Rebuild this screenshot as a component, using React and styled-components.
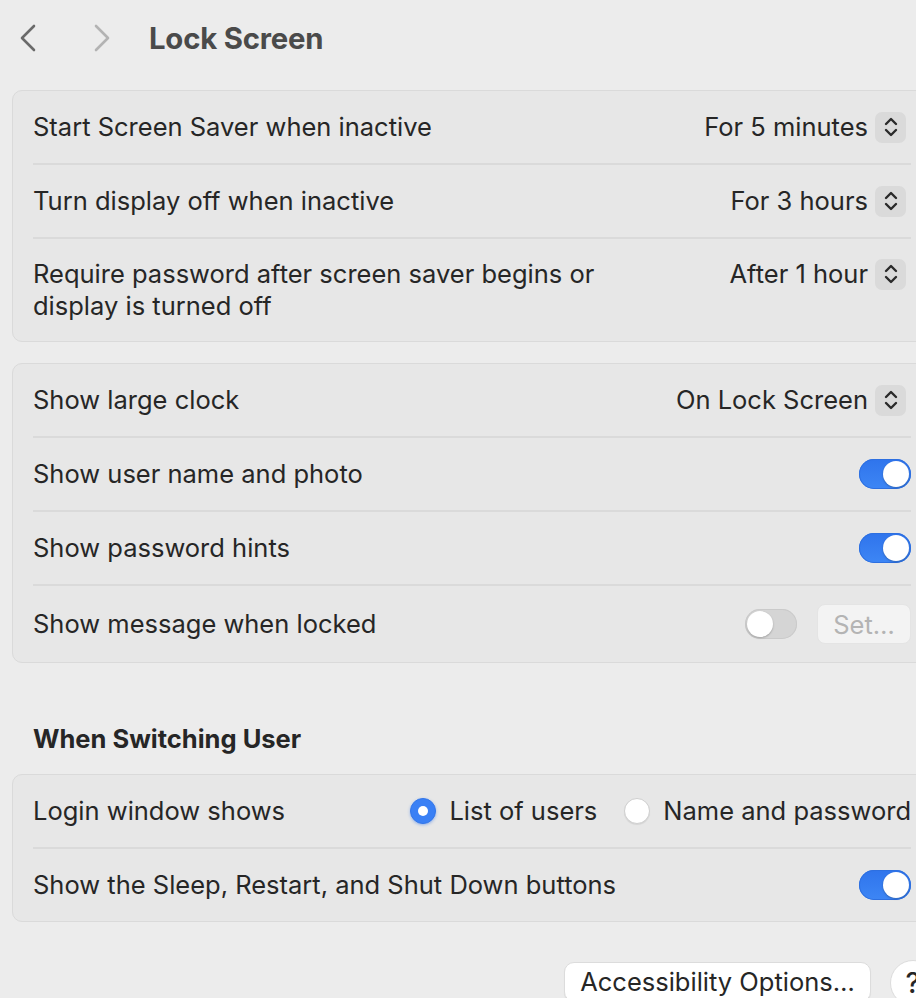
import React from 'react';
import styled, { createGlobalStyle } from 'styled-components';

const GlobalStyle = createGlobalStyle`
  html, body {
    margin: 0;
    padding: 0;
    background: #ececec;
    overflow: hidden;
  }
  body {
    font-family: Inter, "Liberation Sans", sans-serif;
    color: #262626;
    -webkit-font-smoothing: antialiased;
  }
`;

const Page = styled.div`
  width: 920px;
  margin-left: 12px;
  display: flex;
  flex-direction: column;
`;

const Header = styled.div`
  height: 76px;
  display: flex;
  align-items: center;
  margin-left: -12px;
  padding-left: 17px;
  margin-bottom: 14px;
`;

const NavButton = styled.button`
  background: none;
  border: none;
  padding: 0;
  width: 22px;
  height: 28px;
  margin-right: ${({ gap }) => gap}px;
  color: ${({ dim }) => (dim ? '#b3b3b3' : '#6a6a6a')};
  display: flex;
  align-items: center;
  justify-content: center;
`;

const Title = styled.h1`
  margin: 0;
  font-size: 29.3px;
  font-weight: 700;
  color: #4a4a4a;
  letter-spacing: -0.2px;
`;

const Panel = styled.div`
  background: #e7e7e7;
  border: 1px solid #dadada;
  border-radius: 10px;
  padding: 0 20px;
  margin-bottom: ${({ mb }) => mb || 0}px;
`;

const Row = styled.div`
  min-height: 40px;
  padding: ${({ pad }) => pad || 16}px 0;
  display: flex;
  align-items: ${({ top }) => (top ? 'flex-start' : 'center')};
  justify-content: space-between;
  gap: 20px;
  & + & {
    border-top: 2px solid #dadada;
  }
`;

const Label = styled.div`
  font-size: 25.5px;
  line-height: 32px;
  max-width: ${({ narrow }) => (narrow ? '600px' : 'none')};
`;

const Controls = styled.div`
  display: flex;
  align-items: center;
  gap: ${({ gap }) => gap || 7}px;
  flex-shrink: 0;
  margin-right: ${({ mr }) => mr || 0}px;
`;

const Value = styled.span`
  font-size: 25.5px;
  line-height: 32px;
`;

const Stepper = styled.div`
  width: 31px;
  height: 31px;
  flex-shrink: 0;
  border-radius: 7px;
  background: #dadada;
  display: flex;
  align-items: center;
  justify-content: center;
  color: #2a2a2a;
`;

const Track = styled.div`
  width: 52px;
  height: 30px;
  flex-shrink: 0;
  border-radius: 15px;
  box-sizing: border-box;
  padding: 2px;
  display: flex;
  justify-content: ${({ on }) => (on ? 'flex-end' : 'flex-start')};
  background: ${({ on }) => (on ? 'linear-gradient(#2f74ec, #3d86f5)' : '#d5d5d5')};
  box-shadow: inset 0 0 0 1px ${({ on }) => (on ? '#2d6fe0' : '#cacaca')};
`;

const Knob = styled.div`
  width: 26px;
  height: 26px;
  border-radius: 50%;
  background: #ffffff;
  box-shadow: 0 1px 2px rgba(0, 0, 0, 0.25);
`;

const SetButton = styled.button`
  width: 94px;
  height: 40px;
  border-radius: 8px;
  border: 1px solid #e4e4e4;
  background: #f3f3f3;
  color: #b4b4b4;
  font-family: inherit;
  font-size: 25.5px;
  padding: 0;
`;

const SectionTitle = styled.h2`
  margin: 0 0 19px 21px;
  font-size: 25.5px;
  line-height: 32px;
  font-weight: 700;
  color: #262626;
`;

const RadioOption = styled.label`
  display: flex;
  align-items: center;
  gap: 13px;
  font-size: 25.5px;
  line-height: 32px;
`;

const RadioDot = styled.span`
  width: 26px;
  height: 26px;
  border-radius: 50%;
  box-sizing: border-box;
  display: flex;
  align-items: center;
  justify-content: center;
  background: ${({ checked }) => (checked ? '#3a80f5' : '#ffffff')};
  border: 1px solid ${({ checked }) => (checked ? '#3276ea' : '#cfcfcf')};
  box-shadow: ${({ checked }) => (checked ? '0 1px 3px rgba(50,118,234,0.45)' : '0 1px 1px rgba(0,0,0,0.08)')};
  &::after {
    content: '';
    width: 10px;
    height: 10px;
    border-radius: 50%;
    background: #ffffff;
    display: ${({ checked }) => (checked ? 'block' : 'none')};
  }
`;

const Footer = styled.div`
  display: flex;
  justify-content: flex-end;
  align-items: flex-start;
  gap: 19px;
  padding-top: 40px;
  margin-right: -4px;
`;

const PlainButton = styled.button`
  height: 40px;
  width: 307px;
  padding: 0;
  border-radius: 10px;
  border: 1px solid #dcdcdc;
  background: #ffffff;
  font-family: inherit;
  font-size: 25.5px;
  line-height: 32px;
  color: #262626;
  box-shadow: 0 1px 1px rgba(0, 0, 0, 0.06);
`;

const HelpButton = styled.button`
  width: 46px;
  height: 46px;
  margin-top: -2px;
  border-radius: 50%;
  border: 1px solid #dcdcdc;
  background: #ffffff;
  font-family: inherit;
  font-size: 28px;
  font-weight: 500;
  padding: 0;
  color: #262626;
`;

const Chevron = ({ dir }) => (
  <svg width="18" height="28" viewBox="0 0 18 28" fill="none">
    <path
      d={dir === 'left' ? 'M15 2 L3 14 L15 26' : 'M3 2 L15 14 L3 26'}
      stroke="currentColor"
      strokeWidth="2.6"
      strokeLinecap="round"
      strokeLinejoin="round"
    />
  </svg>
);

const UpDown = () => (
  <svg width="16" height="24" viewBox="0 0 16 24" fill="none">
    <path d="M3 9 L8 4 L13 9" stroke="currentColor" strokeWidth="2.4" strokeLinecap="round" strokeLinejoin="round" />
    <path d="M3 15 L8 20 L13 15" stroke="currentColor" strokeWidth="2.4" strokeLinecap="round" strokeLinejoin="round" />
  </svg>
);

const Popup = ({ value }) => (
  <Controls mr={5}>
    <Value>{value}</Value>
    <Stepper><UpDown /></Stepper>
  </Controls>
);

const Toggle = ({ on }) => (
  <Track on={on ? 1 : 0}>
    <Knob />
  </Track>
);

export default function App() {
  return (
    <>
      <GlobalStyle />
      <Page>
        <Header>
          <NavButton gap={52}><Chevron dir="left" /></NavButton>
          <NavButton gap={36} dim><Chevron dir="right" /></NavButton>
          <Title>Lock Screen</Title>
        </Header>

        <Panel mb={21}>
          <Row>
            <Label>Start Screen Saver when inactive</Label>
            <Popup value="For 5 minutes" />
          </Row>
          <Row>
            <Label>Turn display off when inactive</Label>
            <Popup value="For 3 hours" />
          </Row>
          <Row pad={19} top>
            <Label narrow>Require password after screen saver begins or display is turned off</Label>
            <Popup value="After 1 hour" />
          </Row>
        </Panel>

        <Panel mb={60}>
          <Row>
            <Label>Show large clock</Label>
            <Popup value="On Lock Screen" />
          </Row>
          <Row>
            <Label>Show user name and photo</Label>
            <Toggle on />
          </Row>
          <Row>
            <Label>Show password hints</Label>
            <Toggle on />
          </Row>
          <Row pad={18}>
            <Label>Show message when locked</Label>
            <Controls gap={20}>
              <Toggle />
              <SetButton>Set…</SetButton>
            </Controls>
          </Row>
        </Panel>

        <SectionTitle>When Switching User</SectionTitle>

        <Panel>
          <Row>
            <Label>Login window shows</Label>
            <Controls gap={27}>
              <RadioOption><RadioDot checked />List of users</RadioOption>
              <RadioOption><RadioDot />Name and password</RadioOption>
            </Controls>
          </Row>
          <Row>
            <Label>Show the Sleep, Restart, and Shut Down buttons</Label>
            <Toggle on />
          </Row>
        </Panel>

        <Footer>
          <PlainButton>Accessibility Options…</PlainButton>
          <HelpButton>?</HelpButton>
        </Footer>
      </Page>
    </>
  );
}
